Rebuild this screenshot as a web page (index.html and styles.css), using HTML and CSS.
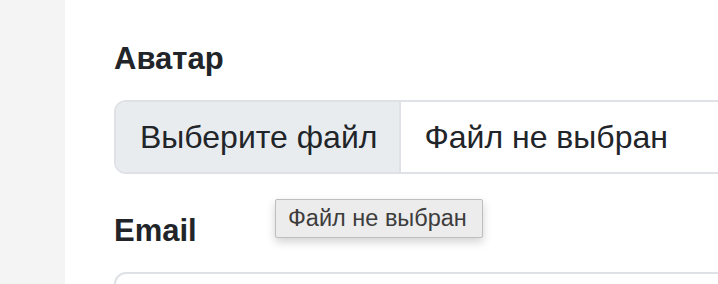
FILE: index.html
```html
<!DOCTYPE html>
<html lang="ru">
<head>
    <meta charset="UTF-8">
    <meta name="viewport" content="width=device-width, initial-scale=1.0">
    <title>Профиль</title>
    <link rel="stylesheet" href="styles.css">
</head>
<body>
    <div class="layout">
        <!-- Sidebar -->
        <aside class="sidebar"></aside>

        <!-- Profile form -->
        <main class="content">
            <form class="profile-form">
                <div class="field">
                    <label class="field-label" for="avatar">Аватар</label>
                    <div class="file-input" id="avatar" title="Файл не выбран">
                        <span class="file-btn">Выберите файл</span>
                        <span class="file-name">Файл не выбран</span>
                    </div>
                </div>

                <div class="field">
                    <label class="field-label" for="email">Email</label>
                    <div class="text-input" id="email"></div>
                </div>
            </form>

            <div class="tooltip">Файл не выбран</div>
        </main>
    </div>
</body>
</html>
```

FILE: styles.css
```css
/* Reset */
* {
    margin: 0;
    padding: 0;
    box-sizing: border-box;
}

body {
    font-family: 'Liberation Sans', Arial, sans-serif;
    background-color: #fff;
    color: #212529;
    height: 284px;
    overflow: hidden;
}

.layout {
    display: flex;
    height: 100%;
    overflow: hidden;
}

.sidebar {
    width: 65px;
    flex-shrink: 0;
    background-color: #f4f4f4;
}

.content {
    position: relative;
    flex-grow: 1;
    min-width: 0;
    overflow: hidden;
    padding: 36px 0 0 49px;
}

.profile-form {
    width: 760px;
}

.field {
    margin-bottom: 34px;
}

.field-label {
    display: block;
    font-size: 31px;
    line-height: 46px;
    font-weight: 600;
    margin-bottom: 18px;
}

/* File input */
.file-input {
    display: flex;
    border: 2px solid #dee2e6;
    border-radius: 12px;
    overflow: hidden;
    font-size: 32px;
    line-height: 46px;
}

.file-btn {
    padding: 12px 22px 12px 24px;
    background-color: #e9ecef;
    border-right: 2px solid #dee2e6;
}

.file-name {
    padding: 12px 24px 12px 23px;
}

.text-input {
    height: 74px;
    border: 2px solid #dee2e6;
    border-radius: 12px;
}

/* Native title tooltip */
.tooltip {
    position: absolute;
    left: 210px;
    top: 199px;
    padding: 0 15px 0 12px;
    height: 39px;
    line-height: 37px;
    font-size: 23.5px;
    color: #3d3d3d;
    background-color: #ececec;
    border: 1px solid #bebebe;
    border-radius: 2px;
    box-shadow: 0 4px 10px rgba(0, 0, 0, 0.18);
}
```
